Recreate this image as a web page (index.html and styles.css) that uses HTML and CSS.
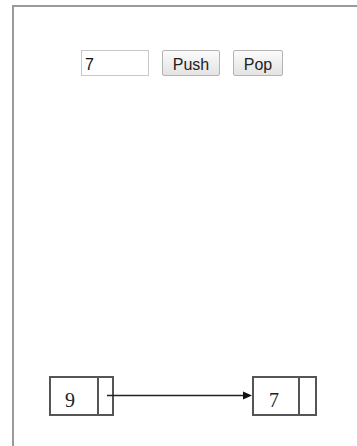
FILE: index.html
```html
<!DOCTYPE html>
<html>
<head>
    <meta charset="UTF-8">
    <meta name="viewport" content="width=device-width, initial-scale=1.0">
    <title>Linked Stack</title>
    <link rel="stylesheet" href="styles.css">
</head>
<body>
    <div class="frame">
        <div class="controls">
            <input id="value" type="text" value="7">
            <button id="push" class="push">Push</button>
            <button id="pop" class="pop">Pop</button>
        </div>

        <svg class="list" width="343" height="70" viewBox="0 0 343 70">
            <!-- node 9 -->
            <rect x="36" y="17" width="63" height="38" fill="none" stroke="#555" stroke-width="2"/>
            <line x1="84" y1="17" x2="84" y2="55" stroke="#555" stroke-width="2"/>
            <text x="56" y="47" class="num">9</text>

            <!-- pointer -->
            <line x1="93" y1="35.5" x2="230" y2="35.5" stroke="#222" stroke-width="1.5"/>
            <polygon points="229,31.5 238,35.5 229,39.5" fill="#111"/>

            <!-- node 7 -->
            <rect x="239" y="17" width="63" height="38" fill="none" stroke="#555" stroke-width="2"/>
            <line x1="285" y1="17" x2="285" y2="55" stroke="#555" stroke-width="2"/>
            <text x="260" y="47" class="num">7</text>
        </svg>
    </div>
</body>
</html>
```

FILE: styles.css
```css
html, body {
    height: 100%;
    overflow: hidden;
}

body {
    box-sizing: border-box;
    margin: 0;
    padding: 5px 0 0 12px;
    font-family: "Liberation Sans", Arial, sans-serif;
    background: #fff;
}

.frame {
    box-sizing: border-box;
    height: 100%;
    border-top: 2px solid #9a9a9a;
    border-left: 2px solid #9a9a9a;
}

.controls {
    display: flex;
    align-items: center;
    gap: 13px;
    padding: 43px 0 0 67px;
}

.controls input {
    box-sizing: border-box;
    width: 68px;
    height: 26px;
    padding: 3px 3px 0;
    border: 1px solid #c8c8c8;
    font-family: "Liberation Sans", Arial, sans-serif;
    font-size: 16px;
    color: #111;
    outline: none;
}

.controls button {
    box-sizing: border-box;
    height: 26px;
    padding: 3px 0 0;
    border: 1px solid #b4b4b4;
    border-radius: 2px;
    background: linear-gradient(#fbfbfb, #e3e3e3);
    font-family: "Liberation Sans", Arial, sans-serif;
    font-size: 16px;
    color: #222;
}

.push {
    width: 58px;
}

.pop {
    width: 50px;
}

.list {
    display: block;
    margin-top: 284px;
}

.num {
    font-family: "Liberation Serif", "Times New Roman", serif;
    font-size: 20px;
    text-anchor: middle;
    fill: #222;
}
```
